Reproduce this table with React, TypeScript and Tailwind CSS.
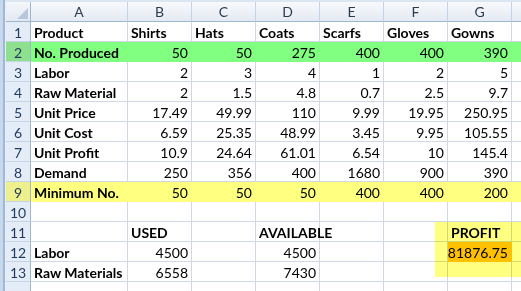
import React from 'react';

type Fill = 'green' | 'yellow' | undefined;

interface RowData {
  n: number;
  cells: string[];
  fill?: Fill;
}

const rows: RowData[] = [
  { n: 1, cells: ['Product', 'Shirts', 'Hats', 'Coats', 'Scarfs', 'Gloves', 'Gowns'] },
  { n: 2, cells: ['No. Produced', '50', '50', '275', '400', '400', '390'], fill: 'green' },
  { n: 3, cells: ['Labor', '2', '3', '4', '1', '2', '5'] },
  { n: 4, cells: ['Raw Material', '2', '1.5', '4.8', '0.7', '2.5', '9.7'] },
  { n: 5, cells: ['Unit Price', '17.49', '49.99', '110', '9.99', '19.95', '250.95'] },
  { n: 6, cells: ['Unit Cost', '6.59', '25.35', '48.99', '3.45', '9.95', '105.55'] },
  { n: 7, cells: ['Unit Profit', '10.9', '24.64', '61.01', '6.54', '10', '145.4'] },
  { n: 8, cells: ['Demand', '250', '356', '400', '1680', '900', '390'] },
  { n: 9, cells: ['Minimum No.', '50', '50', '50', '400', '400', '200'], fill: 'yellow' },
  { n: 10, cells: ['', '', '', '', '', '', ''] },
  { n: 11, cells: ['', 'USED', '', 'AVAILABLE', '', '', 'PROFIT'] },
  { n: 12, cells: ['Labor', '4500', '', '4500', '', '', '81876.75'] },
  { n: 13, cells: ['Raw Materials', '6558', '', '7430', '', '', ''] },
];

const letters = ['A', 'B', 'C', 'D', 'E', 'F', 'G'];

const isNum = (s: string) => /^[\d.]+$/.test(s);

const fillCls = (fill: Fill) => {
  if (fill === 'green') return 'bg-[#80ff80] border-[#80ff80]';
  if (fill === 'yellow') return 'bg-[#ffff80] border-[#ffff80]';
  return 'bg-white border-[#d0d7e5]';
};

const headFill = (fill: Fill) => {
  if (fill === 'green') return 'bg-[#8ee08e]';
  if (fill === 'yellow') return 'bg-[#eef08e]';
  return 'bg-[#e4ecf7]';
};

const Cell = ({ value, index, fill, orange }: { value: string; index: number; fill: Fill; orange?: boolean }) => {
  const num = isNum(value);
  return (
    <div
      className={`flex h-full shrink-0 items-end whitespace-nowrap border-r border-b pb-[1px] ${
        index === 0 ? 'w-[97px]' : 'w-[64px]'
      } ${orange ? 'bg-[#ffc000] border-[#ffc000]' : fillCls(fill)} ${
        num ? 'justify-end pr-[3px] font-normal' : 'justify-start pl-[3px] font-bold'
      }`}
    >
      {/* text may spill into the next empty cell, like Excel */}
      <span className="relative z-10">{value}</span>
    </div>
  );
};

const Row = ({ row }: { row: RowData }) => (
  <div className="flex h-[20px] shrink-0">
    <div
      className={`flex h-full w-[25px] shrink-0 items-end justify-center border-r border-b border-r-[#9eb6ce] border-b-[#c5d3e6] pb-[1px] text-[#1f3a5c] ${headFill(row.fill)}`}
    >
      {row.n}
    </div>
    {row.cells.map((c, i) => (
      <Cell key={i} value={c} index={i} fill={row.fill} orange={row.n === 12 && i === 6} />
    ))}
    <div className={`h-full flex-1 border-b ${fillCls(row.fill)}`} />
  </div>
);

export default function App() {
  return (
    <div
      className="relative flex h-[291px] w-[521px] overflow-hidden bg-white text-[14px] leading-none text-black"
      style={{ fontFamily: 'Lato, "Liberation Sans", sans-serif' }}
    >
      {/* window frame on the left */}
      <div className="flex h-full w-[6px] shrink-0">
        <div className="h-full w-[3px] bg-[#c9d9ec]" />
        <div className="h-full w-[2px] bg-[#9db8da]" />
        <div className="h-full w-[1px] bg-[#e9eff7]" />
      </div>

      <div className="flex min-w-0 flex-1 flex-col">
        <div className="h-[2px] shrink-0 bg-[#dde6f0]" />
        {/* column headers */}
        <div className="flex h-[20px] shrink-0">
          <div className="relative h-full w-[25px] shrink-0 border-r border-b border-r-[#9eb6ce] border-b-[#9eb6ce] bg-linear-to-b from-[#f4f7fb] to-[#e3e9f2]">
            <svg className="absolute right-[2px] bottom-[2px]" width="11" height="11" viewBox="0 0 11 11">
              <polygon points="11,0 11,11 0,11" fill="#b7c6da" />
            </svg>
          </div>
          {letters.map((l, i) => (
            <div
              key={l}
              className={`flex h-full shrink-0 items-center justify-center border-r border-b border-r-[#c5d3e6] border-b-[#9eb6ce] bg-linear-to-b from-[#f7f9fc] to-[#e4eaf3] text-[#2f3b4a] ${
                i === 0 ? 'w-[97px]' : 'w-[64px]'
              }`}
            >
              {l}
            </div>
          ))}
          <div className="h-full flex-1 border-b border-[#9eb6ce] bg-linear-to-b from-[#f7f9fc] to-[#e4eaf3]" />
        </div>
        {rows.map((r) => (
          <Row key={r.n} row={r} />
        ))}
        {/* partly visible row 14 */}
        <div className="flex h-[20px] shrink-0">
          <div className="h-full w-[25px] shrink-0 border-r border-r-[#9eb6ce] bg-[#e4ecf7]" />
          {letters.map((l, i) => (
            <div
              key={l}
              className={`h-full shrink-0 border-r border-[#d0d7e5] ${i === 0 ? 'w-[97px]' : 'w-[64px]'}`}
            />
          ))}
        </div>
      </div>

      {/* highlighted profit box */}
      <div className="pointer-events-none absolute top-[222px] left-[435px] h-[55px] w-[90px] bg-[#ffff80] mix-blend-multiply" />
    </div>
  );
}
